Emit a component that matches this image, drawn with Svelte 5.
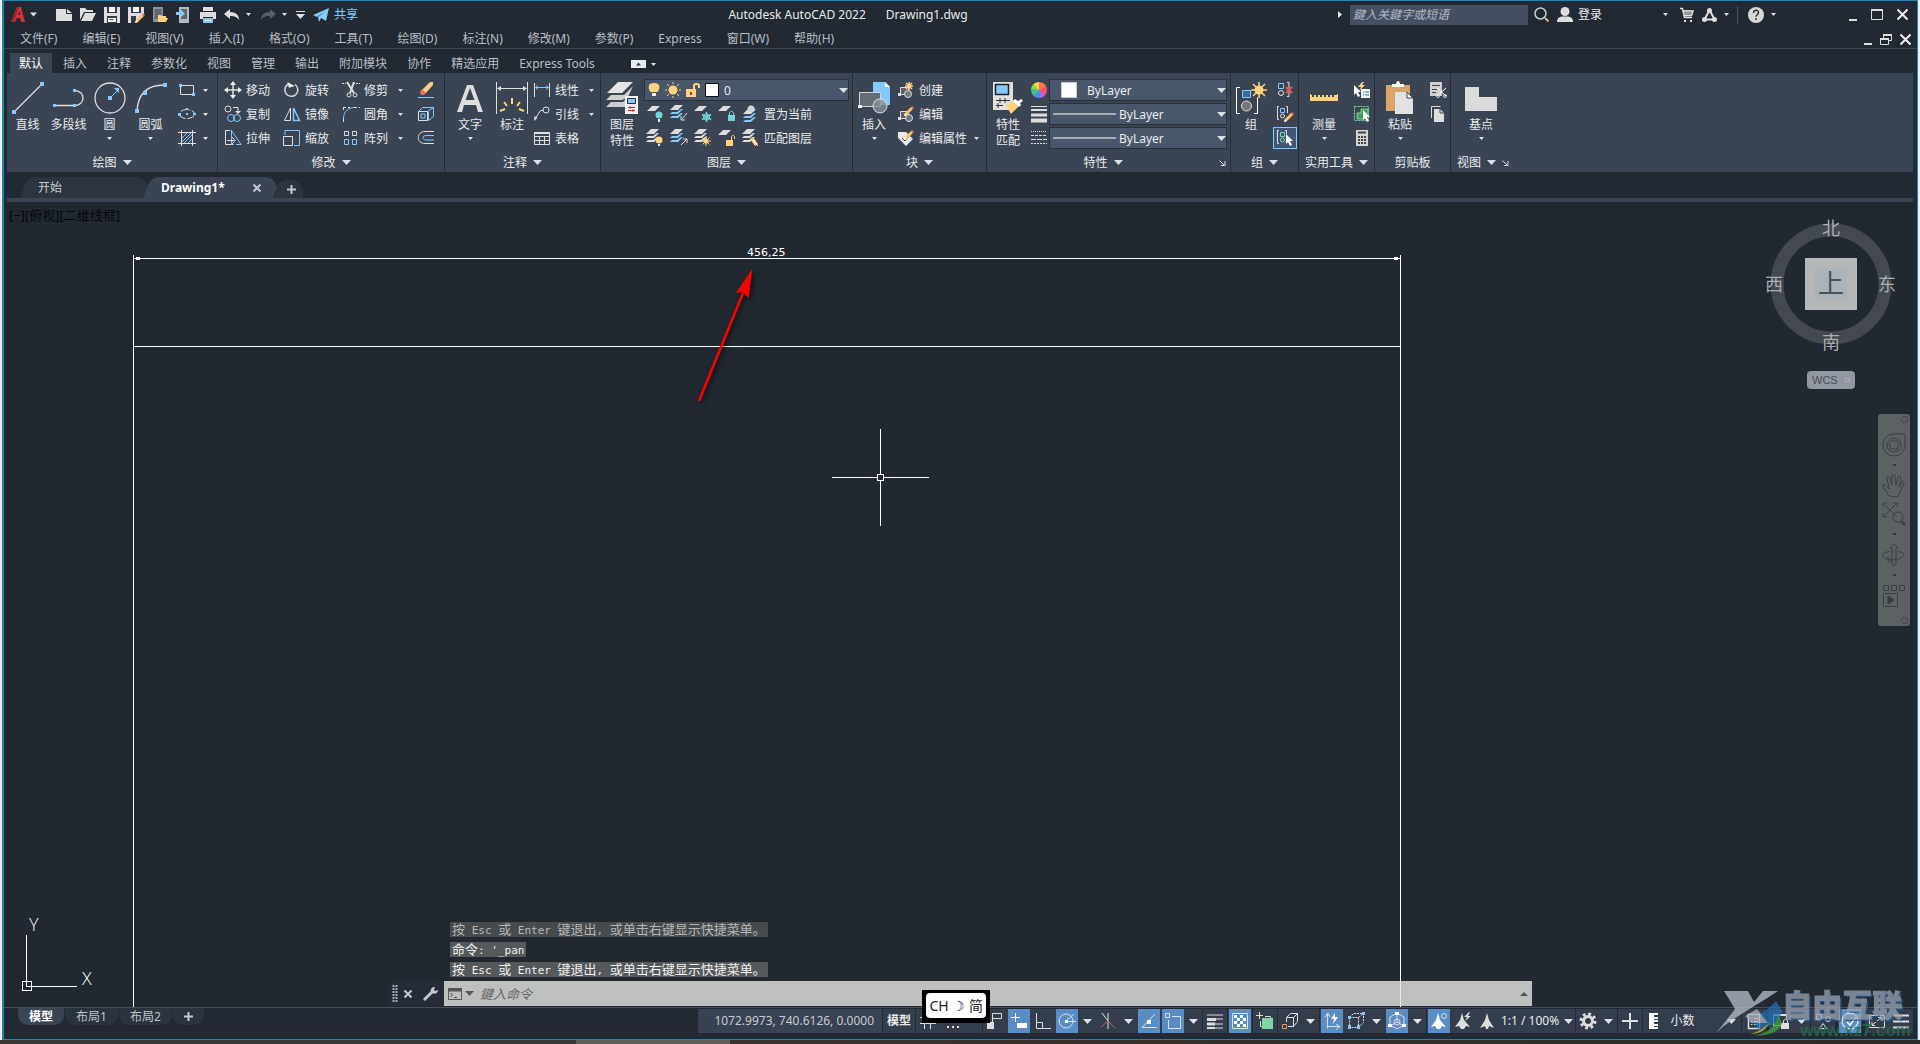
<script lang="ts">
  const menus = [
    '文件(F)', '编辑(E)', '视图(V)', '插入(I)', '格式(O)', '工具(T)', '绘图(D)',
    '标注(N)', '修改(M)', '参数(P)', 'Express', '窗口(W)', '帮助(H)'
  ];
  const ribbonTabs = [
    '默认', '插入', '注释', '参数化', '视图', '管理', '输出', '附加模块', '协作', '精选应用', 'Express Tools'
  ];
  const history = [
    '按 Esc 或 Enter 键退出, 或单击右键显示快捷菜单。',
    "命令: '_pan",
    '按 Esc 或 Enter 键退出, 或单击右键显示快捷菜单。'
  ];

  let activeTab = $state('默认');
  let layout = $state('模型');
  let command = $state('');
  let query = $state('');

  const W = '#dedede';
  const B = '#83c9fb';
  const Y = '#ffd27d';
  const G = '#7fd6a0';
  const T = '#6fd6d8';

  const pencil = (x: number, y: number) =>
    `<g transform="translate(${x} ${y})" stroke="none"><path d="M0 9 1 6 7 0 9 2 3 8Z" fill="#ffc266"/><path d="M7 0 9 2 10 1 8-1Z" fill="#f0715f"/><path d="M0 9 1 6 3 8Z" fill="#fff"/></g>`;
  const sheets = (c: string, n = 3) =>
    Array.from({ length: n }, (_, i) => `<path d="M0 ${5 + i * 4}h8l5-5h-${i ? 2 : 8}${i ? `l-4 3h-5` : ''}Z" fill="${i ? c : W}" stroke="none"/>`).join('');
  const cursor = (x: number, y: number) =>
    `<path transform="translate(${x} ${y})" d="M0 0v10l2-2 2 4 2-1-2-4h3Z" fill="#fff" stroke="none"/>`;

  // [width, height, markup]
  const icons: Record<string, [number, number, string]> = {
    down: [9, 5, `<path d="M0 0h9L4.500 5Z" fill="#dde1e6" stroke="none"/>`],
    downS: [5, 3, `<path d="M0 0h5L2.500 3Z" fill="#dde1e6" stroke="none"/>`],
    up: [8, 4, `<path d="M0 4h8L4 0Z" fill="#555" stroke="none"/>`],
    rightS: [4, 7, `<path d="M0 0v7L4 3.500Z" fill="#e6e6e6" stroke="none"/>`],
    launch: [7, 7, `<path d="M.5 1.500 5 6M6 2v4.500H2"/>`],
    plus: [9, 9, `<path d="M4.500 0v9M0 4.500h9" stroke="#c4c7cc" stroke-width="2"/>`],
    close: [8, 8, `<path d="M.5.5l7 7M7.500.5l-7 7" stroke="#c4c7cc" stroke-width="2"/>`],

    logo: [16, 16, `<path d="M1 15 7 0h4l4 15h-4l-1-4H7l-2 4ZM8 8h2L9.500 4Z" fill="#d3343b" fill-rule="evenodd" stroke="none"/><path d="M1 15 7 0h2L4 15Z" fill="#a52228" stroke="none"/>`],
    fileNew: [16, 12, `<path d="M0 0h10v5h6v7H0ZM11 0l5 4h-5Z" fill="${W}" stroke="none"/>`],
    fileOpen: [16, 13, `<path d="M0 12V0h5l2 2h6v2H4L0 12ZM5 5h11l-4 8H1Z" fill="${W}" stroke="none"/>`],
    save: [16, 16, `<path d="M0 0h16v16H0Z" fill="${W}" stroke="none"/><path d="M3 0h10v6H3ZM3 9h10v7H3Z" fill="#353c48" stroke="none"/><path d="M5 0h6v5H5ZM4 11h8v4H4Z" fill="#f4f4f4" stroke="none"/><path d="M5.500 12.500h4" stroke="#555"/>`],
    saveAs: [16, 16, `<path d="M0 0h16v7l-9 9H0Z" fill="${W}" stroke="none"/><path d="M3 0h10v6H3ZM3 9h5v7H3Z" fill="#353c48" stroke="none"/><path d="M5 0h6v5H5Z" fill="#f4f4f4" stroke="none"/>${pencil(7, 7)}`],
    mobileOpen: [16, 16, `<path d="M1 0h10v15H1Z" fill="#8d9299" stroke="none"/><path d="M2.500 2h7v10h-7Z" fill="#5f6670" stroke="none"/><path d="M6 15V8h3l1 1h4v2h2l-2 4Z" fill="${Y}" stroke="none"/>`],
    mobileSave: [14, 16, `<path d="M3 0h10v16H3Z" fill="#b6bac0" stroke="none"/><path d="M5 2h6v10H5Z" fill="#5f6670" stroke="none"/><path d="M0 5h4V2l5 4.500L4 11V8H0Z" fill="${B}" stroke="none"/>`],
    print: [16, 16, `<path d="M3 0h10v4H3ZM0 5h16v7h-3v-2H3v2H0Z" fill="${W}" stroke="none"/><path d="M3 11h10v5H3Z" fill="${B}" stroke="none"/><path d="M5 13.500h6" stroke="#fff"/>`],
    undo: [16, 12, `<path d="M0 5 6 0v3c6 0 9 3 9 8-2-3-4-4-9-4v3Z" fill="${W}" stroke="none"/>`],
    redo: [16, 12, `<path d="M16 5 10 0v3C4 3 1 6 1 11c2-3 4-4 9-4v3Z" fill="#585e68" stroke="none"/>`],
    more: [9, 8, `<path d="M0 .5h9"/><path d="M0 3h9L4.500 8Z" fill="${W}" stroke="none"/>`],
    plane: [16, 14, `<path d="M0 7 16 0l-3 13-5-3-2 4-1-5 8-6-9 6Z" fill="${B}" stroke="none"/>`],
    search: [15, 15, `<circle cx="6.500" cy="6.500" r="5.500" stroke="#c9cdd2" stroke-width="1.500"/><path d="m11 11 3.500 3.500" stroke="#d8b48b" stroke-width="2"/>`],
    user: [16, 15, `<path d="M0 15c0-4 2-5 5-5.500h6c3 .5 5 1.500 5 5.500Z" fill="${W}" stroke="none"/><circle cx="8" cy="4.500" r="4.500" fill="${W}" stroke="none"/>`],
    cart: [14, 14, `<path d="M0 .5h2.500l2 9H12M3 3h10l-1.500 4.500H4" stroke-width="1.500"/><path d="M3 3h10l-1.500 4.500H4Z" fill="#999" /><path d="M4 12h2v2H4ZM10 12h2v2h-2Z" fill="${W}" stroke="none"/>`],
    appStore: [15, 14, `<path d="M7.500 2 2.500 11.500h10Z" stroke-width="2"/><g fill="${W}" stroke="none"><circle cx="7.500" cy="2.500" r="2.500"/><circle cx="2.500" cy="11.500" r="2.500"/><circle cx="12.500" cy="11.500" r="2.500"/></g>`],
    help: [16, 16, `<circle cx="8" cy="8" r="8" fill="#d8d8d8" stroke="none"/><path d="M5.500 6c0-3.500 5-3.500 5-.5C10.500 7.500 8 7.500 8 9.800M8 11v2" stroke="#333" stroke-width="1.500"/>`],
    winMin: [8, 12, `<path d="M0 11h8" stroke-width="2"/>`],
    winMax: [12, 11, `<path d="M.5.5h11v10H.5Z" /><path d="M0 1h12" stroke-width="2"/>`],
    winClose: [11, 11, `<path d="M.5.5l10 10M10.500.5l-10 10" stroke="#eee" stroke-width="2"/>`],
    winRestore: [12, 11, `<path d="M3.500 4V.5h8v6H8M.5 4.500h8v6h-8Z"/><path d="M3 1h9M0 5h9" stroke-width="2"/>`],
    ribbonMin: [15, 8, `<path d="M0 0h15v8H0Z" fill="#e9ecef" stroke="none"/><path d="M5 5.500h5L7.500 2.500Z" fill="#333" stroke="none"/>`],

    line: [32, 32, `<path d="M2 30 30 2" stroke-width="1.300"/><path d="M0 28h4v4H0ZM28 0h4v4h-4Z" fill="${B}" stroke="none"/>`],
    polyline: [32, 32, `<path d="M1 23.500h20c12 0 12-15 0-15" stroke-width="1.300"/><path d="M0 22h3v3H0ZM20 22h3v3h-3ZM20 7h3v3h-3Z" fill="${B}" stroke="none"/>`],
    circle: [32, 32, `<circle cx="16" cy="16" r="15" stroke-width="1.300"/><path d="m16 16 8-8" stroke="${B}"/><path d="M14 14h4v4h-4ZM25 6v5l-5-5Z" fill="${B}" stroke="none"/>`],
    arc: [32, 32, `<path d="M2 29C3 12 12 3 29 3" stroke-width="1.300"/><path d="M0 27h4v4H0ZM8 9h4v4H8ZM28 1h4v4h-4Z" fill="${B}" stroke="none"/>`],
    rect: [18, 16, `<path d="M2.500 3.500h13v9h-13Z"/><path d="M1 2h3v3H1ZM14 11h3v3h-3Z" fill="${B}" stroke="none"/>`],
    ellipse: [18, 16, `<ellipse cx="9" cy="8" rx="7.500" ry="4.500" stroke-dasharray="9 2"/><path d="M0 7h3v3H0ZM8 7h2v2H8ZM8 2h2v2H8ZM15 7h3v2h-3Z" fill="${B}" stroke="none"/>`],
    hatch: [18, 16, `<path d="M3.500 0v16M14.500 0v16M0 2.500h18M0 13.500h18"/><path d="m4 8 5-5M4 12l9-9M6 13l8-8M10 13l4-4" stroke="${B}"/>`],
    move: [18, 18, `<path d="M9 2v14M2 9h14" stroke-width="1.500"/><path d="M9 0l3 4H6ZM9 18l3-4H6ZM0 9l4-3v6ZM18 9l-4-3v6Z" fill="#eee" stroke="none"/>`],
    rotate: [18, 18, `<path d="M12 3.500A6.500 6.500 0 1 1 5.500 3" stroke-width="1.500"/><path d="M5 0v6h6Z" transform="rotate(-15 8 3)" fill="#eee" stroke="none"/>`],
    trim: [18, 18, `<path d="M0 2.500h4M11 2.500h7" stroke-dasharray="2 1"/><path d="m5 1 7 11M12 1 8 12" stroke-width="2"/><circle cx="7" cy="14" r="2"/><circle cx="13" cy="14" r="2"/>`],
    erase: [18, 16, `<path d="M5 8 13 0h3v3L8 12Z" fill="#ffc98a" stroke="none"/><path d="m3 10 2-3 4 4-2 2H4Z" fill="#e6705c" stroke="none"/><path d="M1 15.500h16" stroke="${B}"/>`],
    copy: [18, 18, `<circle cx="4" cy="4" r="3"/><path d="M9 2.500h5V7"/><path d="M11 6h6l-3 3Z" fill="${W}" stroke="none"/><circle cx="7" cy="13" r="3.500" stroke="${B}"/><circle cx="13" cy="13" r="3.500" stroke="${B}"/>`],
    mirror: [18, 16, `<path d="M7.500 2v12.500H1.500Z"/><path d="M10.500 2v12.500h6Z" stroke="${B}" stroke-width="1.500"/>`],
    fillet: [18, 16, `<path d="M1.500 16V12C2 5 6 2 12 1.500" stroke="${B}"/><path d="M12 1.500h6M1.500 16v-3M1 1.500h7M1.500 1v5" stroke-dasharray="3 2"/>`],
    solid: [18, 16, `<path d="M1.500 5.500h9v9h-9Z"/><path d="m1.500 5.500 4-4h11v9l-5 4V5.500h-1l6-4M5.500 1.500" stroke="${B}"/><path d="M4 8h4v4H4Z" stroke="${B}"/>`],
    stretch: [18, 18, `<path d="M6 1.500H1.500v14h8"/><path d="M7.500 1v14.500M7.500 1.500 17 15.500h-5" stroke="${B}"/><path d="M3 11.500h7M8 8l3 3.500L8 15"/>`],
    scale: [18, 16, `<path d="M2 5V.5h14.500v15H11" stroke="${B}"/><path d="M.5 6.500h9v9h-9Z"/>`],
    array: [18, 16, `<path d="M2.500 1.500h4v4h-4ZM10.500 1.500h4v4h-4Z"/><path d="M2.500 9.500h4v5h-4ZM10.500 9.500h4v5h-4Z" stroke="${B}"/>`],
    offset: [18, 16, `<path d="M17 1.500H8c-9 0-9 12 0 12h9"/><path d="M17 5.500H9c-4 0-4 4.500 0 4.500h8" stroke="${B}"/>`],

    text: [26, 32, `<path d="M0 30 10 3h6l10 27h-5l-2-7H7l-2 7ZM8.500 18h9L13 6Z" fill="${W}" fill-rule="evenodd" stroke="none"/>`],
    dimension: [32, 34, `<path d="M.5 1v32M31.500 1v32M2 7.500h28"/><path d="M1 7.500 5 5v5ZM31 7.500 27 5v5Z" fill="${W}" stroke="none"/><path d="m4 30 5-2M8 21l3 4M16 17v6M24 21l-3 4M28 30l-5-2" stroke="${Y}" stroke-width="2"/>`],
    linear: [18, 16, `<path d="M1.500 1v14M16.500 1v14"/><path d="M3 5.500h12M5 3.500 2.500 5.500 5 7.500M13 3.500l2.500 2L13 7.500" stroke="${B}"/>`],
    leader: [18, 16, `<circle cx="13" cy="4" r="3"/><path d="M10 4.500H7.500L2 13"/><path d="m1 15 .5-5 3 2Z" fill="${W}" stroke="none"/>`],
    table: [18, 16, `<path d="M1.500 2.500h15v12h-15ZM1.500 6.500h15M1.500 10.500h15M6.500 6v8M11.500 6v8"/><path d="M1 3h16" stroke-width="2"/>`],

    layerProps: [34, 34, `<path d="M2 12 13 1h15L17 12Z" fill="#e4e4e4" stroke="none"/><path d="M6 14h13l9-9-5 11-6 3H1ZM6 21h12l3-3v8H1Z" fill="#cfcfcf" stroke="none"/><path d="M20 15h13v18H20Z" fill="#f3f3f3" stroke="none"/><path d="M22.500 17.500h8v5h-8Z" fill="${B}" stroke="#234"/><path d="M23 26.500h7M23 29.500h7M25 25v3M28 28v3" stroke="#b33"/>`],
    bulb: [12, 14, `<path d="M6 0c7 0 6 6 3.500 9h-7C0 6-1 0 6 0Z" fill="${Y}" stroke="none"/><path d="M4 10h4v3H4Z" fill="#eee" stroke="none"/>`],
    sun: [16, 16, `<circle cx="8" cy="8" r="4.500" fill="${Y}" stroke="none"/><path d="M8 0v2M8 14v2M0 8h2M14 8h2M2 2l2 2M12 12l2 2M14 2l-2 2M4 12l-2 2" stroke="${Y}"/>`],
    unlock: [14, 14, `<path d="M0 6h10v8H0Z" fill="${Y}" stroke="none"/><path d="M8 6V2.500c0-2 5-2 5 0V5" stroke="${Y}" stroke-width="2"/><path d="M4 9h2v3H4Z" fill="#654" stroke="none"/>`],
    swatch: [14, 14, `<path d="M.5.5h13v13H.5Z" fill="#fff" stroke="#111"/>`],
    layOff: [18, 18, `<g transform="translate(1 1)">${sheets(W, 1)}</g><circle cx="13" cy="10" r="3.500" fill="${T}" stroke="none"/><path d="M12 14h2v3h-2Z" fill="#eee" stroke="none"/>`],
    layIso: [18, 18, `${sheets(B)}<path d="m17 8-5 6M11 11v4h4"/>`],
    layFreeze: [18, 18, `<g transform="translate(0 1)">${sheets(W, 1)}</g><path d="M12.500 7v10M8 9.500l9 5M17 9.500l-9 5" stroke="${T}" stroke-width="1.500"/><circle cx="12.500" cy="12" r="3" stroke="${T}"/>`],
    layLock: [18, 18, `<g transform="translate(0 1)">${sheets(W, 1)}</g><path d="M10 10h7v6h-7Z" fill="${T}" stroke="none"/><path d="M11.500 10V8c0-2 4-2 4 0v2" stroke="${T}"/>`],
    layCurrent: [18, 18, `<g transform="translate(1 4)">${sheets(B)}</g><circle cx="9" cy="4" r="3.500" fill="#cfd3d8" stroke="none"/>`],
    layOn: [18, 18, `${sheets(W)}<circle cx="13" cy="11" r="3.500" fill="${Y}" stroke="none"/><path d="M12 15h2v2h-2Z" fill="#eee" stroke="none"/>`],
    layUniso: [18, 18, `${sheets(B)}<path d="m11 16 6-6M13 10h4v4"/>`],
    layThaw: [18, 18, `${sheets(W)}<circle cx="12" cy="12" r="2.500" fill="${Y}" stroke="none"/><path d="M12 7v10M7 12h10M8.500 8.500l7 7M15.500 8.500l-7 7" stroke="${Y}"/>`],
    layUnlock: [18, 18, `<g transform="translate(0 1)">${sheets(W, 1)}</g><path d="M8 11h7v6H8Z" fill="${Y}" stroke="none"/><path d="M13.500 11V8c0-2 3-2 3 0v2" stroke="${Y}"/>`],
    layMatch: [18, 18, `${sheets(W)}<path d="m8 10 3-2 5 7-3 2Z" fill="${Y}" stroke="none"/><path d="m11 11 5 6" stroke="#fff"/>`],

    insert: [32, 32, `<path d="M15 0h12l5 5v18H15Z" fill="${B}" stroke="none"/><path d="M27 0v5h5Z" fill="#fff" stroke="none"/><path d="M1.500 10.500h21v14h-21Z" fill="#666c76" stroke="#d6d6d6"/><circle cx="22" cy="24" r="7" fill="#8a8f97" fill-opacity=".8"/><path d="M0 23h4v3H0Z" fill="#fff" stroke="none"/>`],
    blockNew: [18, 18, `<path d="M3.500 6.500h8v7h-8Z" fill="#59606b"/><circle cx="11" cy="13" r="3.500" fill="#777"/><path d="M1 12h3v3H1Z" fill="${W}" stroke="none"/><path d="M12 1v8M8 5h8M9 2l6 6M15 2 9 8" stroke="${Y}" stroke-width="1.500"/>`],
    blockEdit: [18, 18, `<path d="M3.500 6.500h8v7h-8Z" fill="#59606b"/><circle cx="12" cy="13" r="3.500" fill="#777"/><path d="M1 12h3v3H1Z" fill="${W}" stroke="none"/>${pencil(7, 2)}`],
    attrEdit: [18, 18, `<path d="M1 3h8l7 7-7 7-8-8Z" fill="#e9e9e9" stroke="none"/><path d="m5 9 3 3 5-6" stroke="#444"/>${pencil(7, 2)}`],
    matchProps: [32, 34, `<path d="M1 1h20v28H1Z" fill="#e0e0e0" stroke="none"/><path d="M3.500 3.500h13v10h-13Z" fill="${B}" stroke="#222" stroke-width="1.500"/><path d="M4 19.500h14M4 24.500h7M8 17v5M13 17v5M6 22v5" stroke="#333"/><path d="m14 25 7-6 6 6-8 8Z" fill="${Y}" stroke="none"/><path d="m21 20 6 6 2-2-1-2 3-2-2-2-3 2-3-2Z" fill="#fff" stroke="none"/>`],
    lineweight: [18, 18, `<path d="M1 1.500h16"/><path d="M1 5h16" stroke-width="2"/><path d="M1 10h16" stroke-width="3"/><path d="M1 15.500h16" stroke-width="4"/>`],
    linetype: [18, 16, `<path d="M1 1.500h16" stroke-dasharray="1 1"/><path d="M1 5.500h16" stroke-dasharray="3 1"/><path d="M1 9.500h16" stroke-dasharray="5 1"/><path d="M1 13.500h16" stroke-dasharray="2 1"/>`],
    white: [16, 16, `<path d="M.5.5h15v15H.5Z" fill="#fff" stroke="#ccc"/>`],
    longLine: [63, 2, `<path d="M0 1h63" stroke="#fff"/>`],

    group: [32, 32, `<path d="M5 5.500H1.500v26H5M19 31.500h3.500v-16" stroke="#fff"/><path d="M7.500 8.500h8v7h-8Z" fill="#3c6c96" stroke="${B}"/><circle cx="11.500" cy="24" r="5" fill="#777"/><circle cx="24" cy="8" r="4.500" fill="${Y}" stroke="none"/><path d="M24 0v16M16 8h16M18 2l12 12M30 2 18 14" stroke="${Y}" stroke-width="1.500"/>`],
    ungroup: [18, 18, `<path d="M2.500 2.500h5v5h-5Z" stroke="${B}"/><circle cx="5" cy="12" r="2.500"/><path d="M11 1.500h2v14h-2"/><path d="m10 6 6 6M16 6l-6 6" stroke="#e8525b" stroke-width="2"/>`],
    groupEdit: [18, 18, `<path d="M3 1.500H1.500v13H3M10 1.500h1.500V8"/><path d="M4.500 3.500h4v4h-4Z" stroke="${B}"/><circle cx="6.500" cy="11" r="2"/>${pencil(8, 8)}`],
    groupSelect: [18, 18, `<path d="M3 1.500H1.500v13H3M9 1.500h1.500V5"/><path d="M4.500 3.500h4v4h-4Z" stroke="${G}"/><circle cx="6.500" cy="11" r="2" stroke="${G}"/>${cursor(10, 5)}`],
    ruler: [28, 32, `<path d="M0 13h28v6H0Z" fill="${Y}" stroke="none"/><path d="M3 11v4M7 11v4M11 11v4M15 11v4M19 11v4M23 11v4" stroke="#3b4453" stroke-width="2"/><path d="M0 12h1v3H0ZM27 12h1v3h-1Z" fill="${Y}" stroke="none"/>`],
    quickSelect: [18, 18, `<path d="M9 1 5 6h3l-2 4 6-6H9l2-3Z" fill="${Y}" stroke="none"/>${cursor(1, 4)}<path d="M8 8h9v9H8Z" fill="#f1f1f1" stroke="none"/><path d="M10 11h1M12 11h4M10 14h1M12 14h4" stroke="#2c79b8"/>`],
    selectAll: [18, 18, `<path d="M1.500 1.500h14v14h-14Z" stroke="${G}" stroke-dasharray="2 1"/><path d="M4 8h4V4h7v7h-3v3H4Z" fill="#3f9b62" stroke="${G}"/>${cursor(10, 5)}`],
    calc: [18, 18, `<path d="M3 1h12v16H3Z" fill="#d4d4d4" stroke="none"/><path d="M5 3.500h8" stroke="#444" stroke-width="2"/><path d="M5 8h8M5 11h8M5 14h8" stroke="#444" stroke-width="2" stroke-dasharray="2 1"/>`],
    paste: [28, 34, `<path d="M0 4h24v26H0Z" fill="#d9a566" stroke="none"/><path d="M6 3h4c0-4 4-4 4 0h4v3H6Z" fill="#fff" stroke="none"/><path d="M9 11h12l6 6v16H9Z" fill="#e2e2e2" stroke="none"/><path d="M21 11v6h6Z" fill="#fff" stroke="#3b4453"/>`],
    cut: [18, 18, `<path d="M1 1h12v14H1Z" fill="#cfcfcf" stroke="none"/><path d="M3 4.500h8M3 8.500h5M3 11.500h4" stroke="#444"/><path d="m8 7 9 8M17 7l-9 8" stroke="#fff"/><circle cx="9" cy="15" r="1.500"/><circle cx="16" cy="15" r="1.500"/>`],
    copyClip: [18, 18, `<path d="M2.500 13V1.500h9"/><path d="M5 4h6l4 4v9H5Z" fill="${W}" stroke="none"/><path d="M11 4v4h4" stroke="#444"/>`],
    base: [32, 32, `<path d="M0 5h14v10h18v14H0Z" fill="#dcdcdc" stroke="none"/>`],

    console: [14, 12, `<path d="M.5.5h13v11H.5Z" stroke="#555"/><path d="M0 2h14" stroke="#555" stroke-width="3"/><path d="m2.500 5 2 2-2 2M6 9.500h3" stroke="#444"/>`],
    wrench: [15, 14, `<path d="m1 13 8-8" stroke="#c4c7cc" stroke-width="3"/><path d="M8 5c-1-3 1-5 4-5l-1 3 1 1 3-1c0 3-3 5-6 3Z" fill="#c4c7cc" stroke="none"/>`],
    grip: [6, 18, `<path d="M1.500 0v18M4.500 0v18" stroke="#a9adb3" stroke-width="2" stroke-dasharray="2 1"/>`],

    sGrid: [16, 16, `<path d="M0 4.500h16M0 10.500h16M4.500 0v16M10.500 0v16"/>`],
    sDots: [14, 4, `<path d="M0 2h14" stroke-width="2" stroke-dasharray="2 3"/>`],
    sSnap: [18, 18, `<path d="M6.500 12V1.500h9v5h-9" stroke-width="1"/><path d="M1 10h7v7H1Z" fill="${W}" stroke="none"/>`],
    sDyn: [18, 16, `<path d="M5.500 0v9M1 4.500h9" stroke="#fff"/><path d="M7 10h10v5H7Z" fill="#fff" stroke="none"/>`],
    sOrtho: [18, 18, `<path d="M2.500 1v15.500H17M2.500 10.500h6v6"/>`],
    sPolar: [18, 18, `<circle cx="8" cy="9" r="7"/><path d="m8 9 8-7M8 9.500h10"/><path d="M7 8h3v3H7Z" fill="#fff" stroke="none"/>`],
    sIso: [18, 18, `<path d="m3 1 6 8v8M9 9V1"/><path d="m9 9 7 7M9 9l-7 6" stroke="#b76b62"/>`],
    sTrack: [18, 18, `<path d="M15 2 2 15.500h15"/><path d="M7 8h4v4H7Z" fill="#fff" stroke="none"/>`],
    sOsnap: [18, 18, `<path d="M8 4.500h8.500v12h-12V8"/><path d="M1.500 1.500h4v4h-4Z"/>`],
    sLw: [18, 16, `<path d="M1 2h16" /><path d="M1 6.500h9" stroke-width="3"/><path d="M10 6h7M9 11h8M9 15h8"/><path d="M1 11h8" stroke-width="3"/><path d="M1 15h8" stroke-width="2"/>`],
    sTrans: [18, 18, `<path d="M1.500 1.500h15v15h-15Z"/><path d="M3 4.500h12M3 10.500h12" stroke="#fff" stroke-width="3" stroke-dasharray="3 3"/><path d="M6 7.500h9M6 13.500h9" stroke="#fff" stroke-width="3" stroke-dasharray="3 3"/>`],
    sCycle: [18, 18, `<path d="M3.500 0v7M0 3.500h7"/><path d="M6 6h11v11H6Z" fill="${G}" stroke="none"/><path d="M4.500 9v5.500H6M9 4.500h5.500V6"/>`],
    s3d: [18, 18, `<path d="M5.500 10V5.500l4-4h7v8l-4 5H7M5.500 5.500h7v9M12.500 5.500l4-4"/><path d="M1.500 12.500h4v4h-4Z" stroke="#e69a66"/>`],
    sUcs: [18, 18, `<path d="M4.500 16.500V2M4.500 14.500H16M2 5l2.500-4L7 5M13 12l4 2.500-4 3"/><path d="m12 1-4 6h3l-1 5 5-7h-3Z" fill="#fff" stroke="none"/>`],
    sFilter: [18, 18, `<path d="M2.500 5.500h9v10h-9ZM2.500 5.500l4-4h10v9l-5 5M11.500 5.500l5-4" stroke-dasharray="2 1"/><path d="M1 13h3v4H1ZM10 13h3v4h-3ZM15 0h3v3h-3ZM1 4h3v3H1Z" fill="${B}" stroke="none"/>`],
    sGizmo: [18, 18, `<path d="m9 1 7 4v8l-7 4-7-4V5ZM9 1v9l7 4M9 10l-7 4"/><circle cx="9" cy="10" r="3"/><path d="M7 0h4v3H7ZM0 12h4v3H0ZM14 12h4v3h-4Z" fill="#fff" stroke="none"/>`],
    sAnno1: [18, 18, `<path d="m8 1 2 7 6 7-4-1-2 3H7l-2-3-4 1 5-7Z" fill="#fff" stroke="none"/><circle cx="14" cy="4" r="2.500"/>`],
    sAnno2: [18, 18, `<path d="m8 1 2 7 6 7-4-1-2 3H7l-2-3-4 1 5-7Z" fill="${W}" stroke="none"/><path d="m15 0-5 5h3l-2 4 6-5h-3l2-4Z" fill="${W}" stroke="none"/>`],
    sAnno3: [18, 18, `<path d="m9 1 2 7 5 8-5-2-1 3H8l-1-3-5 2 5-8Z" fill="${W}" stroke="none"/>`],
    gear: [18, 18, `<circle cx="9" cy="9" r="4.500" stroke-width="3"/><circle cx="9" cy="9" r="7" stroke-width="3" stroke-dasharray="2.750 2.750"/>`],
    bigPlus: [18, 18, `<path d="M9 1v16M1 9h16" stroke-width="2"/>`],
    units: [10, 18, `<path d="M1 1h9v2H6v2h4v2H6v1h4v2H6v2h4v2H6v1h4v2H1Z" fill="#fff" stroke="none"/>`],
    sList: [16, 18, `<path d="M2.500 2.500h11v14h-11Z" stroke-width="1.500"/><path d="M5 6.500h1.500M8 6.500h4M5 9.500h1.500M8 9.500h4M5 12.500h1.500M8 12.500h4"/>`],
    sLockUi: [18, 18, `<path d="M9 13.500H1.500v-11h13V7"/><path d="M1 3h14" stroke-width="2"/><path d="M9 11h8v6H9Z" fill="${W}" stroke="none"/><path d="M11.500 11V9c0-2 4-2 4 0v2"/>`],
    sIsolate: [18, 18, `<path d="M2.500 2.500h5v5h-5ZM9 11.500l3.500 5h-7Z"/><circle cx="14" cy="7" r="2.500"/>`],
    sPerf: [20, 20, `<circle cx="10" cy="10" r="8" stroke-width="1.500"/><path d="m7 11 3 3 6-8" stroke="#fff" stroke-width="1.500"/>`],
    sClean: [18, 16, `<path d="M1.500 2.500h15v12h-15Z"/><path d="m9 8 4-3M10 4.500h4V8M8 9l-4 3M4 9v3.500h3"/>`],
    sMenu: [18, 16, `<path d="M1 2.500h16M1 8.500h16M1 14.500h16" stroke-width="2"/>`],

    wheel: [24, 24, `<path d="M12 1h11v11A11 11 0 1 1 12 1Z"/><circle cx="12" cy="12" r="7"/><path d="M9 8h6l2 3-2 5H9l-2-5Z"/>`],
    hand: [24, 24, `<path d="M7 22 1 13c-1-2 1-3 3-1l3 3L5 4c0-2 2-2 3 0l2 7V2c0-2 3-2 3 0l1 9 2-8c0-2 3-1 3 1l-2 9 3-5c1-2 3 0 2 2l-4 8-2 5Z"/>`],
    zoomExt: [24, 24, `<path d="m1 1 14 14M15 1 1 15M1 5V1h4M11 1h4v4M1 11v4h4"/><circle cx="16" cy="15" r="5"/><path d="m19 19 4 4" stroke-width="3"/>`],
    orbit: [24, 24, `<path d="M10 22V5H8l4-4 4 4h-2v17Z"/><path d="M8 17C-2 15-1 9 8 8.500M16 8.500c9 1 9 7-8 8.500M5 14l4 3-4 3"/>`],
    motion: [24, 24, `<path d="M1.500 1.500h5v5h-5ZM9.500 1.500h5v5h-5ZM17.500 1.500h5v5h-5ZM1.500 9.500h14v13h-14Z"/><path d="M6 12v8l6-4Z" fill="#34393f"/>`]
  };

  type Cell = { icon: string; label: string; on?: boolean; drop?: boolean; sep?: boolean };
  const status: Cell[] = [
    { icon: 'sSnap', label: '捕捉模式', sep: true },
    { icon: 'sDyn', label: '动态输入', on: true },
    { icon: 'sOrtho', label: '正交' },
    { icon: 'sPolar', label: '极轴追踪', on: true, drop: true },
    { icon: 'sIso', label: '等轴测草图', drop: true },
    { icon: 'sTrack', label: '对象捕捉追踪', on: true },
    { icon: 'sOsnap', label: '对象捕捉', on: true, drop: true },
    { icon: 'sLw', label: '线宽', sep: true },
    { icon: 'sTrans', label: '透明度', on: true, sep: true },
    { icon: 'sCycle', label: '选择循环', sep: true },
    { icon: 's3d', label: '三维对象捕捉', drop: true, sep: true },
    { icon: 'sUcs', label: '动态 UCS', on: true, sep: true },
    { icon: 'sFilter', label: '选择过滤', drop: true },
    { icon: 'sGizmo', label: '小控件', on: true, drop: true },
    { icon: 'sAnno1', label: '注释可见性', on: true, sep: true },
    { icon: 'sAnno2', label: '自动缩放' },
    { icon: 'sAnno3', label: '注释比例' }
  ];
</script>

{#snippet ic(name: string)}
  {@const [w, h, body] = icons[name]}
  <svg class="ic" width={w} height={h} viewBox="0 0 {w} {h}" aria-hidden="true">{@html body}</svg>
{/snippet}

{#snippet big(icon: string, label: string, drop: boolean)}
  <button class="big">
    <span class="art">{@render ic(icon)}</span>
    {#each label.split(' ') as part}<span>{part}</span>{/each}
    {#if drop}<span class="below">{@render ic('downS')}</span>{/if}
  </button>
{/snippet}

{#snippet small(icon: string, label: string, drop: boolean)}
  <button class="small" aria-label={label || icon}>
    <span class="slot">{@render ic(icon)}</span>
    {#if label}<span class="name">{label}</span>{/if}
    {#if drop}<span class="tail">{@render ic('downS')}</span>{/if}
  </button>
{/snippet}

{#snippet footer(label: string, drop: boolean, launch: boolean)}
  <div class="footer">
    <span class="caption">{label}{#if drop}{@render ic('down')}{/if}</span>
    {#if launch}<button class="launch" aria-label="{label}设置">{@render ic('launch')}</button>{/if}
  </div>
{/snippet}

<div class="desktop">
  <div class="window">
    <header class="titlebar">
      <button class="app" aria-label="应用程序菜单">{@render ic('logo')}{@render ic('down')}</button>
      <div class="quick">
        {#each ['fileNew', 'fileOpen', 'save', 'saveAs', 'mobileOpen', 'mobileSave', 'print'] as name}
          <button class="tool" aria-label={name}>{@render ic(name)}</button>
        {/each}
        <button class="tool wide" aria-label="放弃">{@render ic('undo')}{@render ic('downS')}</button>
        <button class="tool wide" aria-label="重做">{@render ic('redo')}{@render ic('downS')}</button>
        <button class="tool slim" aria-label="自定义">{@render ic('more')}</button>
        <button class="share">{@render ic('plane')}<span>共享</span></button>
      </div>
      <h1><span>Autodesk AutoCAD 2022</span><span>Drawing1.dwg</span></h1>
      <div class="account">
        {@render ic('rightS')}
        <input class="search" type="text" placeholder="鍵入关鍵字或短语" aria-label="搜索" bind:value={query} />
        <button aria-label="搜索">{@render ic('search')}</button>
        <button class="login">{@render ic('user')}<span>登录</span>{@render ic('downS')}</button>
        <button aria-label="商店">{@render ic('cart')}</button>
        <button class="pair" aria-label="应用">{@render ic('appStore')}{@render ic('downS')}</button>
        <span class="rule"></span>
        <button class="pair" aria-label="帮助">{@render ic('help')}{@render ic('downS')}</button>
      </div>
      <div class="controls">
        <button aria-label="最小化">{@render ic('winMin')}</button>
        <button aria-label="最大化">{@render ic('winMax')}</button>
        <button aria-label="关闭">{@render ic('winClose')}</button>
      </div>
    </header>

    <nav class="menubar">
      {#each menus as menu}<button>{menu}</button>{/each}
      <div class="doc-controls">
        <button aria-label="最小化图形">{@render ic('winMin')}</button>
        <button aria-label="还原图形">{@render ic('winRestore')}</button>
        <button aria-label="关闭图形">{@render ic('winClose')}</button>
      </div>
    </nav>

    <nav class="ribbon-tabs">
      {#each ribbonTabs as tab}
        <button class:active={tab === activeTab} onclick={() => (activeTab = tab)}>{tab}</button>
      {/each}
      <button class="collapse" aria-label="最小化功能区">{@render ic('ribbonMin')}{@render ic('downS')}</button>
    </nav>

    <section class="ribbon">
      <div class="panel draw">
        <div class="body">
          {@render big('line', '直线', false)}
          {@render big('polyline', '多段线', false)}
          {@render big('circle', '圆', true)}
          {@render big('arc', '圆弧', true)}
          <div class="stack">
            {@render small('rect', '', true)}
            {@render small('ellipse', '', true)}
            {@render small('hatch', '', true)}
          </div>
        </div>
        {@render footer('绘图', true, false)}
      </div>

      <div class="panel modify">
        <div class="body grid">
          {@render small('move', '移动', false)}
          {@render small('rotate', '旋转', false)}
          {@render small('trim', '修剪', true)}
          {@render small('erase', '', false)}
          {@render small('copy', '复制', false)}
          {@render small('mirror', '镜像', false)}
          {@render small('fillet', '圆角', true)}
          {@render small('solid', '', false)}
          {@render small('stretch', '拉伸', false)}
          {@render small('scale', '缩放', false)}
          {@render small('array', '阵列', true)}
          {@render small('offset', '', false)}
        </div>
        {@render footer('修改', true, false)}
      </div>

      <div class="panel annotate">
        <div class="body">
          {@render big('text', '文字', true)}
          {@render big('dimension', '标注', false)}
          <div class="stack">
            {@render small('linear', '线性', true)}
            {@render small('leader', '引线', true)}
            {@render small('table', '表格', false)}
          </div>
        </div>
        {@render footer('注释', true, false)}
      </div>

      <div class="panel layers">
        <div class="body">
          {@render big('layerProps', '图层 特性', false)}
          <div class="stack">
            <div class="combo">
              {@render ic('bulb')}{@render ic('sun')}{@render ic('unlock')}{@render ic('swatch')}
              <select aria-label="图层"><option>0</option></select>
              {@render ic('down')}
            </div>
            <div class="row">
              {#each ['layOff', 'layIso', 'layFreeze', 'layLock'] as name}{@render small(name, '', false)}{/each}
              {@render small('layCurrent', '置为当前', false)}
            </div>
            <div class="row">
              {#each ['layOn', 'layUniso', 'layThaw', 'layUnlock'] as name}{@render small(name, '', false)}{/each}
              {@render small('layMatch', '匹配图层', false)}
            </div>
          </div>
        </div>
        {@render footer('图层', true, false)}
      </div>

      <div class="panel block">
        <div class="body">
          {@render big('insert', '插入', true)}
          <div class="stack">
            {@render small('blockNew', '创建', false)}
            {@render small('blockEdit', '编辑', false)}
            {@render small('attrEdit', '编辑属性', true)}
          </div>
        </div>
        {@render footer('块', true, false)}
      </div>

      <div class="panel props">
        <div class="body">
          {@render big('matchProps', '特性 匹配', false)}
          <div class="stack">
            <div class="row">
              <span class="slot"><span class="color-wheel"></span></span>
              <div class="combo">
                {@render ic('white')}
                <select aria-label="对象颜色"><option>ByLayer</option></select>
                {@render ic('down')}
              </div>
            </div>
            {#each ['lineweight', 'linetype'] as name}
              <div class="row">
                <span class="slot">{@render ic(name)}</span>
                <div class="combo lined">
                  {@render ic('longLine')}
                  <select aria-label={name}><option>ByLayer</option></select>
                  {@render ic('down')}
                </div>
              </div>
            {/each}
          </div>
        </div>
        {@render footer('特性', true, true)}
      </div>

      <div class="panel groups">
        <div class="body">
          {@render big('group', '组', false)}
          <div class="stack">
            {@render small('ungroup', '', false)}
            {@render small('groupEdit', '', false)}
            <button class="small pressed" aria-label="启用组选择">{@render ic('groupSelect')}</button>
          </div>
        </div>
        {@render footer('组', true, false)}
      </div>

      <div class="panel utils">
        <div class="body">
          {@render big('ruler', '测量', true)}
          <div class="stack">
            {@render small('quickSelect', '', false)}
            {@render small('selectAll', '', false)}
            {@render small('calc', '', false)}
          </div>
        </div>
        {@render footer('实用工具', true, false)}
      </div>

      <div class="panel utils">
        <div class="body">
          {@render big('paste', '粘贴', true)}
          <div class="stack">
            {@render small('cut', '', false)}
            {@render small('copyClip', '', false)}
          </div>
        </div>
        {@render footer('剪贴板', false, false)}
      </div>

      <div class="panel view">
        <div class="body">{@render big('base', '基点', true)}</div>
        {@render footer('视图', true, true)}
      </div>
    </section>

    <div class="doc-tabs">
      <button class="doc start"><span>开始</span></button>
      <div class="doc current"><span>Drawing1*</span><button aria-label="关闭选项卡">{@render ic('close')}</button></div>
      <button class="doc add" aria-label="新图形"><span>{@render ic('plus')}</span></button>
    </div>

    <main class="canvas">
      <svg class="drawing" aria-hidden="true">
        <g stroke="#fff" fill="none" shape-rendering="crispEdges">
          <path d="M129.500 53V900M1396.500 53V900M129 56.500h1268M129 144.500h1268" />
          <path d="M828 275.500h97M876.500 227v97" />
          <rect x="873.500" y="272.500" width="6" height="6" fill="#212830" />
          <path d="M132 56.500h4M1390 56.500h4" stroke-width="3" />
        </g>
        <text x="743" y="54" class="dim">456,25</text>
        <g class="pointer">
          <path d="M695 199 739 91" stroke="#f00" stroke-width="2.500" />
          <path d="M748 67 732 91l6-1 7 6Z" fill="#f00" />
        </g>
      </svg>

      <div class="view-label">[−][俯视][二维线框]</div>

      <svg class="cube" viewBox="0 0 132 132" aria-label="ViewCube">
        <circle cx="66" cy="66" r="54" fill="none" stroke="#444950" stroke-width="13" />
        <rect x="40" y="40" width="52" height="52" fill="#b4b6b7" />
        <rect x="50" y="50" width="32" height="32" fill="#a9b3b8" />
        <text x="66" y="75" class="top">上</text>
        <text x="66" y="17">北</text>
        <text x="66" y="131">南</text>
        <text x="9" y="73">西</text>
        <text x="122" y="73">东</text>
      </svg>
      <button class="wcs">WCS <span></span></button>

      <div class="navbar">
        <i class="knob"></i>
        <button aria-label="全导航控制盘">{@render ic('wheel')}</button>
        <i class="dot"></i>
        <button aria-label="平移">{@render ic('hand')}</button>
        <button aria-label="范围缩放">{@render ic('zoomExt')}</button>
        <i class="dot"></i>
        <button aria-label="动态观察">{@render ic('orbit')}</button>
        <i class="dot"></i>
        <button aria-label="ShowMotion">{@render ic('motion')}</button>
        <i class="knob last"></i>
      </div>

      <svg class="ucs" viewBox="0 0 90 90" aria-hidden="true">
        <g stroke="#fff" fill="none" shape-rendering="crispEdges">
          <path d="M6.500 30v52M6 81.500h51" />
          <rect x="2.500" y="76.500" width="9" height="9" />
        </g>
        <text x="9" y="26">Y</text>
        <text x="62" y="80">X</text>
      </svg>

      <div class="command">
        <div class="history">
          {#each history as line, i}
            <p class:old={i === 0}>
              {#each line.split(/([ -~]+)/) as part}{#if /^[ -~]/.test(part)}<span>{part}</span>{:else}{part}{/if}{/each}
            </p>
          {/each}
        </div>
        <div class="cmdline">
          <div class="handle">
            {@render ic('grip')}
            <button aria-label="关闭命令行">{@render ic('close')}</button>
            <button aria-label="自定义命令行">{@render ic('wrench')}</button>
          </div>
          <div class="prompt">
            <button class="recent" aria-label="近期使用的命令">{@render ic('console')}{@render ic('down')}</button>
            <input type="text" placeholder="鍵入命令" aria-label="命令" bind:value={command} />
            <button aria-label="展开历史">{@render ic('up')}</button>
          </div>
        </div>
      </div>
    </main>

    <footer class="bottom">
      <div class="layouts">
        {#each ['模型', '布局1', '布局2'] as name}
          <button class:active={name === layout} onclick={() => (layout = name)}>{name}</button>
        {/each}
        <button class="add" aria-label="新建布局">{@render ic('plus')}</button>
      </div>
      <div class="status">
        <span class="coords">1072.9973, 740.6126, 0.0000</span>
        <button class="cell model sep">模型</button>
        <button class="cell sep" aria-label="栅格">{@render ic('sGrid')}</button>
        <button class="cell dots" aria-label="捕捉设置">{@render ic('sDots')}</button>
        {#each status as cell}
          <button class="cell" class:on={cell.on} class:sep={cell.sep} aria-label={cell.label}>{@render ic(cell.icon)}</button>
          {#if cell.drop}<button class="cell arrow" aria-label="{cell.label}选项">{@render ic('down')}</button>{/if}
        {/each}
        <button class="cell scale">1:1 / 100% {@render ic('down')}</button>
        <button class="cell sep" aria-label="切换工作空间">{@render ic('gear')}</button>
        <button class="cell arrow" aria-label="工作空间选项">{@render ic('down')}</button>
        <button class="cell sep" aria-label="注释监视器">{@render ic('bigPlus')}</button>
        <button class="cell units sep">{@render ic('units')}<span>小数</span>{@render ic('down')}</button>
        <button class="cell sep" aria-label="快捷特性">{@render ic('sList')}</button>
        <button class="cell gap" aria-label="锁定用户界面">{@render ic('sLockUi')}</button>
        <button class="cell arrow" aria-label="锁定选项">{@render ic('down')}</button>
        <button class="cell sep" aria-label="隔离对象">{@render ic('sIsolate')}</button>
        <button class="cell on gap" aria-label="图形性能">{@render ic('sPerf')}</button>
        <button class="cell gap" aria-label="全屏显示">{@render ic('sClean')}</button>
        <button class="cell" aria-label="自定义">{@render ic('sMenu')}</button>
      </div>
    </footer>

    <div class="ime"><span>CH ☽ 简</span></div>

    <div class="watermark">
      <svg width="66" height="48" viewBox="0 0 66 48" aria-hidden="true">
        <path d="M34 28c12-2 18-8 26-16l6 10-4 12-20 6Z" fill="#1f6fb0" />
        <path d="M36 46c14 0 24-8 26-20l4 8c-2 8-12 14-30 12Z" fill="#3da33a" />
        <path d="M34 45c8-2 14-6 20-12-4 8-10 12-20 12Z" fill="#c8c22e" />
        <path d="M8 2h24l6 11 9-11h15C42 16 20 26 1 43c8-10 12-15 18-23Z" fill="#b9bfc9" />
        <path d="m29 27 12-7 11 14H35Z" fill="#aab1bd" />
      </svg>
      <div><strong>自由互联</strong><em>www.xz7.com</em></div>
    </div>
  </div>
  <div class="behind"></div>
</div>

<style>
  :global(body) {
    margin: 0;
    background: #eef0f2;
    overflow: hidden;
  }

  .desktop {
    display: flex;
    flex-direction: column;
    height: 100vh;
    font: 12px/16px 'Noto Sans', 'Noto Sans CJK SC', sans-serif;
    color: #e8eaec;
  }

  button,
  select,
  input {
    font: inherit;
    color: inherit;
    background: none;
    border: 0;
    padding: 0;
    margin: 0;
    white-space: nowrap;
  }

  .ic {
    display: block;
    flex: none;
    fill: none;
    stroke: #dedede;
    overflow: visible;
  }

  .window {
    position: relative;
    flex: 1;
    min-height: 0;
    display: flex;
    flex-direction: column;
    margin: 0 2px;
    background: #222933;
    border: 1px solid #1d86b5;
    border-left-width: 2px;
  }

  .behind {
    height: 4px;
    background: linear-gradient(90deg, #3a3634 30%, #635d57 30%, #635d57 38%, #3b322c 38%, #2d2b29);
  }

  .titlebar {
    display: flex;
    align-items: center;
    height: 27px;
    padding-right: 9px;
  }

  .titlebar button,
  .account,
  .controls,
  .quick {
    display: flex;
    align-items: center;
  }

  .app {
    gap: 4px;
    padding: 0 16px 0 6px;
    width: 52px;
    box-sizing: border-box;
  }

  .app .ic:last-child {
    width: 7px;
  }

  .tool {
    width: 24px;
  }

  .tool.wide {
    width: 36px;
    gap: 6px;
  }

  .tool.slim {
    width: 17px;
  }

  .share {
    gap: 5px;
    color: #83c9fb;
  }

  h1 {
    flex: 1;
    display: flex;
    justify-content: center;
    gap: 20px;
    margin: 0;
    font-size: 12px;
    font-weight: 400;
    white-space: nowrap;
  }

  .account {
    gap: 8px;
    margin-right: 73px;
  }

  .search {
    box-sizing: border-box;
    width: 178px;
    height: 20px;
    margin-right: -2px;
    padding: 0 3px;
    background: #454f61;
  }

  .search::placeholder {
    color: #b4bac4;
    font-style: italic;
    opacity: 1;
  }

  .login {
    gap: 5px;
  }

  .login .ic:last-child {
    margin: 0 4px 0 56px;
  }

  .pair {
    gap: 7px;
  }

  .rule {
    width: 1px;
    height: 18px;
    background: #4a515c;
    margin: 0 2px 0 0;
  }

  .controls {
    gap: 14px;
  }

  .menubar {
    display: flex;
    align-items: center;
    gap: 25px;
    box-sizing: border-box;
    height: 21px;
    padding: 2px 6px 0 16px;
    border-bottom: 1px solid #3f4651;
    color: #b9bdc4;
  }

  .doc-controls {
    display: flex;
    gap: 8px;
    margin-left: auto;
  }

  .ribbon-tabs {
    display: flex;
    align-items: flex-end;
    gap: 2px;
    height: 24px;
    padding-left: 6px;
    color: #b9bdc4;
  }

  .ribbon-tabs button {
    height: 20px;
    padding: 2px 9px 0;
  }

  .ribbon-tabs .active {
    background: #3b4453;
    color: #fff;
  }

  .ribbon-tabs .collapse {
    display: flex;
    align-items: center;
    gap: 5px;
    padding-left: 25px;
  }

  .ribbon {
    display: flex;
    height: 99px;
    margin: 0 4px 0 3px;
    background: #3b4453;
  }

  .panel {
    display: flex;
    flex-direction: column;
    flex: none;
    box-sizing: border-box;
    border-right: 1px solid #262c36;
  }

  .panel.view {
    border-right: 0;
  }

  .body {
    display: flex;
    flex: 1;
    padding-top: 5px;
  }

  .footer {
    display: flex;
    align-items: center;
    box-sizing: border-box;
    height: 21px;
    padding-top: 2px;
  }

  .caption {
    flex: 1;
    display: flex;
    align-items: center;
    justify-content: center;
    gap: 6px;
    white-space: nowrap;
  }

  .launch {
    padding-right: 4px;
  }

  .draw {
    width: 211px;
  }

  .modify {
    width: 227px;
  }

  .annotate {
    width: 156px;
  }

  .layers {
    width: 252px;
  }

  .block {
    width: 134px;
  }

  .props {
    width: 244px;
  }

  .groups {
    width: 68px;
  }

  .utils {
    width: 76px;
  }

  .view {
    width: 62px;
  }

  .big {
    display: flex;
    flex-direction: column;
    align-items: center;
    flex: none;
    width: 42px;
  }

  .art {
    display: flex;
    align-items: center;
    justify-content: center;
    height: 39px;
  }

  .below {
    padding-top: 4px;
  }

  .stack {
    display: flex;
    flex-direction: column;
    flex: 1;
    min-width: 0;
  }

  .row {
    display: flex;
    height: 24px;
    align-items: center;
  }

  .small {
    display: flex;
    align-items: center;
    gap: 4px;
    height: 24px;
  }

  .name {
    padding-top: 2px;
  }

  .slot {
    display: flex;
    align-items: center;
    justify-content: center;
    flex: none;
    width: 18px;
  }

  .draw .big {
    width: 41px;
  }

  .draw .stack {
    padding-left: 7px;
  }

  .draw .tail {
    margin-left: 3px;
  }

  .tail {
    margin-left: 6px;
  }

  .body.grid {
    display: grid;
    grid-template-columns: 59px 59px 75px 20px;
    grid-auto-rows: 24px;
    padding-left: 6px;
  }

  .annotate .body {
    padding-left: 4px;
  }

  .layers .body {
    padding-right: 3px;
  }

  .layers .row .small {
    width: 24px;
    padding-left: 3px;
  }

  .layers .row .small:last-child {
    width: auto;
  }

  .block .body {
    gap: 2px;
  }

  .block .tail {
    margin-left: 3px;
  }

  .props .body {
    gap: 1px;
    padding-right: 3px;
  }

  .groups .stack,
  .utils .stack {
    align-items: center;
  }

  .groups .big {
    width: 40px;
  }

  .utils .big {
    width: 50px;
  }

  .view .big {
    width: 60px;
  }

  .small.pressed {
    box-sizing: border-box;
    width: 24px;
    height: 22px;
    margin-top: 1px;
    justify-content: center;
    background: #3f5674;
    border: 1px solid #83c9fb;
  }

  .combo {
    display: flex;
    align-items: center;
    gap: 5px;
    flex: 1;
    box-sizing: border-box;
    height: 22px;
    margin: 1px 0;
    padding: 0 0 0 5px;
    background: #4a566a;
    border: 1px solid #2a313c;
  }

  .combo select {
    flex: 1;
    min-width: 0;
    padding-top: 1px;
    appearance: none;
  }

  .combo > .ic:last-child {
    pointer-events: none;
  }

  .layers .combo {
    flex: none;
    margin-left: 1px;
    padding-left: 3px;
  }

  .props .combo {
    padding-left: 11px;
    gap: 10px;
    margin-left: 1px;
  }

  .props .combo.lined {
    padding-left: 3px;
    gap: 3px;
  }

  .color-wheel {
    width: 16px;
    height: 16px;
    border-radius: 50%;
    background: conic-gradient(#ff7b4d 0 60deg, #ff4f6a 0 120deg, #b265e8 0 170deg, #4a8ef0 0 220deg, #38c98b 0 280deg, #8fd94a 0 320deg, #ffd24a 0);
  }

  .doc-tabs {
    display: flex;
    align-items: flex-end;
    gap: 4px;
    height: 26px;
    margin: 0 4px 0 3px;
    padding-left: 22px;
    border-bottom: 4px solid #3b4453;
  }

  .doc {
    position: relative;
    display: flex;
    align-items: center;
    box-sizing: border-box;
    height: 21px;
    background: #2c343f;
    border-radius: 8px 12px 0 0;
    color: #c6cad0;
  }

  .doc::before {
    content: '';
    position: absolute;
    left: -5px;
    bottom: 0;
    width: 16px;
    height: 21px;
    background: inherit;
    border-radius: 8px 0 0 0;
    transform: skewX(-20deg);
  }

  /* keeps the label above the slanted edge */
  .doc span {
    position: relative;
  }

  .doc.start {
    width: 119px;
    padding-left: 9px;
  }

  .doc.current {
    width: 125px;
    padding: 0 16px 0 9px;
    justify-content: space-between;
    background: #3b4453;
    color: #fff;
    font-weight: 700;
  }

  .doc.add {
    width: 22px;
    height: 18px;
    padding-left: 6px;
  }

  .doc.add::before {
    height: 18px;
  }

  .canvas {
    position: relative;
    flex: 1;
    min-height: 0;
    background: #212830;
    overflow: hidden;
  }

  .drawing {
    position: absolute;
    width: 100%;
    height: 100%;
  }

  .dim {
    font: 11px 'DejaVu Sans', sans-serif;
    fill: #fff;
  }

  .pointer {
    filter: drop-shadow(2px 2px 2px rgb(0 0 0 / 0.6));
  }

  .view-label {
    position: absolute;
    left: 5px;
    top: 5px;
    font-size: 13px;
    color: #05070a;
  }

  .cube {
    position: absolute;
    right: 20px;
    top: 16px;
    width: 132px;
    height: 132px;
    overflow: visible;
    font-size: 18px;
    text-anchor: middle;
    fill: #a9adb2;
  }

  .cube .top {
    font-size: 26px;
    fill: #4b5156;
  }

  .wcs {
    position: absolute;
    right: 62px;
    top: 169px;
    display: flex;
    align-items: center;
    gap: 7px;
    width: 48px;
    height: 18px;
    padding: 0 5px;
    border-radius: 4px;
    background: #9297a2;
    color: #4a4f5a;
    font-family: 'Liberation Sans', sans-serif;
    font-size: 11px;
  }

  .wcs span {
    width: 6px;
    height: 2px;
    border: 1px solid #aab0ba;
  }

  .navbar {
    position: absolute;
    right: 7px;
    top: 212px;
    display: flex;
    flex-direction: column;
    align-items: center;
    box-sizing: border-box;
    width: 32px;
    height: 212px;
    padding: 2px 0;
    border-radius: 3px;
    background: #5c6164;
  }

  .navbar button {
    margin: 2px 0;
  }

  .navbar .ic {
    stroke: #3b4046;
  }

  .knob {
    align-self: flex-end;
    width: 5px;
    height: 5px;
    margin: 0 2px 8px;
    border: 1px solid #3f444a;
    border-radius: 50%;
  }

  .knob.last {
    margin: auto 2px 0;
  }

  .dot {
    width: 3px;
    height: 2px;
    margin: 5px 0 6px;
    background: #32373d;
  }

  .ucs {
    position: absolute;
    left: 16px;
    bottom: 12px;
    width: 90px;
    height: 90px;
    overflow: visible;
    fill: #fff;
    font: 300 18px 'Open Sans', sans-serif;
  }

  .command {
    position: absolute;
    left: 385px;
    right: 385px;
    bottom: 1px;
  }

  .history {
    display: flex;
    flex-direction: column;
    align-items: flex-start;
    gap: 5px;
    padding: 0 0 4px 61px;
  }

  .history p {
    height: 15px;
    margin: 0;
    padding: 0 2px;
    font-size: 13px;
    line-height: 15px;
    background: #56595b;
    color: #f0f0f0;
    white-space: nowrap;
  }

  .history p.old {
    background: #484b4d;
    color: #b4b6b8;
  }

  .history span {
    font: 11px/13px 'DejaVu Sans Mono', monospace;
    white-space: pre;
  }

  .cmdline {
    display: flex;
    height: 25px;
  }

  .handle {
    display: flex;
    align-items: center;
    gap: 6px;
    box-sizing: border-box;
    width: 55px;
    padding-left: 3px;
    background: #262c37;
  }

  .handle button:last-child {
    padding-left: 5px;
  }

  .prompt {
    flex: 1;
    display: flex;
    align-items: center;
    gap: 6px;
    padding: 0 4px;
    background: rgb(230 229 228 / 0.8);
  }

  .prompt input {
    flex: 1;
    color: #222;
    font-size: 13px;
  }

  .prompt input::placeholder {
    color: #666;
    font-style: italic;
    opacity: 1;
  }

  .recent {
    display: flex;
    align-items: center;
    gap: 3px;
  }

  .recent .ic:last-child {
    filter: brightness(0.4);
  }

  .bottom {
    display: flex;
    justify-content: space-between;
    height: 31px;
    padding: 0 4px 0 14px;
    border-top: 1px solid #4a4f57;
  }

  .layouts {
    display: flex;
    gap: 1px;
  }

  .layouts button {
    height: 17px;
    padding: 0 11px;
    background: #2b333f;
    border-radius: 0 0 10px 10px;
    color: #c0c4ca;
  }

  .layouts .active {
    background: #3b4453;
    color: #fff;
    font-weight: 700;
  }

  .status {
    display: flex;
    height: 24px;
    margin-top: 1px;
  }

  .coords {
    box-sizing: border-box;
    width: 184px;
    padding-right: 8px;
    line-height: 24px;
    text-align: right;
    background: #394252;
    color: #c6cad0;
  }

  .cell {
    display: flex;
    align-items: center;
    justify-content: center;
    flex: none;
    box-sizing: border-box;
    width: 24px;
    background: #343d4b;
    border: 1px solid #343d4b;
    border-width: 0 1px;
  }

  .cell.on {
    background: #5a8cc6;
  }

  .cell.sep {
    margin-left: 1px;
  }

  .cell.gap {
    margin-left: 3px;
  }

  .cell.arrow {
    width: 17px;
  }

  .cell.model {
    width: 32px;
    font-weight: 700;
  }

  .cell.dots {
    width: 42px;
    justify-content: flex-start;
    align-items: flex-end;
    padding: 0 0 4px 6px;
  }

  .cell.scale {
    width: 76px;
    gap: 5px;
  }

  .cell.units {
    width: 98px;
    gap: 12px;
  }

  .cell.units .ic:last-child {
    margin-left: 20px;
  }

  .ime {
    position: absolute;
    left: 48%;
    bottom: 16px;
    padding: 3px 4px 5px;
    background: #000;
  }

  .ime span {
    display: block;
    width: 60px;
    line-height: 25px;
    text-align: center;
    border-radius: 4px;
    background: #fff;
    color: #222;
    font-size: 14px;
    white-space: nowrap;
  }

  .watermark {
    position: absolute;
    right: 6px;
    bottom: -2px;
    display: flex;
    align-items: flex-start;
    opacity: 0.75;
    pointer-events: none;
  }

  .watermark strong {
    display: block;
    font-size: 30px;
    line-height: 32px;
    font-weight: 900;
    color: #9aa3b3;
    -webkit-text-stroke: 1px #9aa3b3;
    text-shadow: 2px 2px 0 #255f96;
  }

  .watermark em {
    display: block;
    padding-left: 18px;
    font: 700 17px/20px 'Liberation Sans', sans-serif;
    color: #23704a;
  }
</style>
